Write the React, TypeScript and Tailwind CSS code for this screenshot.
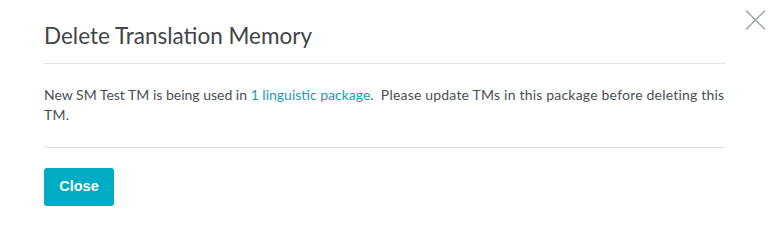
import React from "react";

export default function App() {
  return (
    <div className="relative w-[777px] h-[217px] bg-white" style={{ fontFamily: "Lato, 'Noto Sans', sans-serif" }}>
      <button className="absolute left-[745px] top-[10px] w-[21px] h-[20px]" aria-label="Close">
        <svg width="21" height="20" viewBox="0 0 21 20">
          <path d="M1 0.5 L20 19.5 M20 0.5 L1 19.5" stroke="#a3abab" strokeWidth="1.5" fill="none" />
        </svg>
      </button>
      <div className="ml-[44px] w-[682px]">
        <div className="pt-[23px] pb-[14px] border-b border-[#e3e3e3]">
          <h2 className="text-[22.5px] leading-[26px] text-[#3f4548]">Delete Translation Memory</h2>
        </div>
        <div className="pt-[21px] pb-[22px] border-b border-[#e3e3e3]">
          <p className="text-[14px] leading-[20px] text-[#4a4f52]">
            New SM Test TM is being used in{" "}
            <a className="text-[#1b9cb8]">1 linguistic package</a>.&nbsp;&nbsp;
            <span className="tracking-[0.2px]">Please update TMs in this package before deleting this TM.</span>
          </p>
        </div>
        <div className="pt-[20px]">
          <button
            className="w-[70px] h-[38px] rounded-[3px] bg-[#00abc4] text-white text-[14.5px] font-bold"
            style={{ fontFamily: "'Liberation Sans', Arial, sans-serif" }}
          >
            Close
          </button>
        </div>
      </div>
    </div>
  );
}
